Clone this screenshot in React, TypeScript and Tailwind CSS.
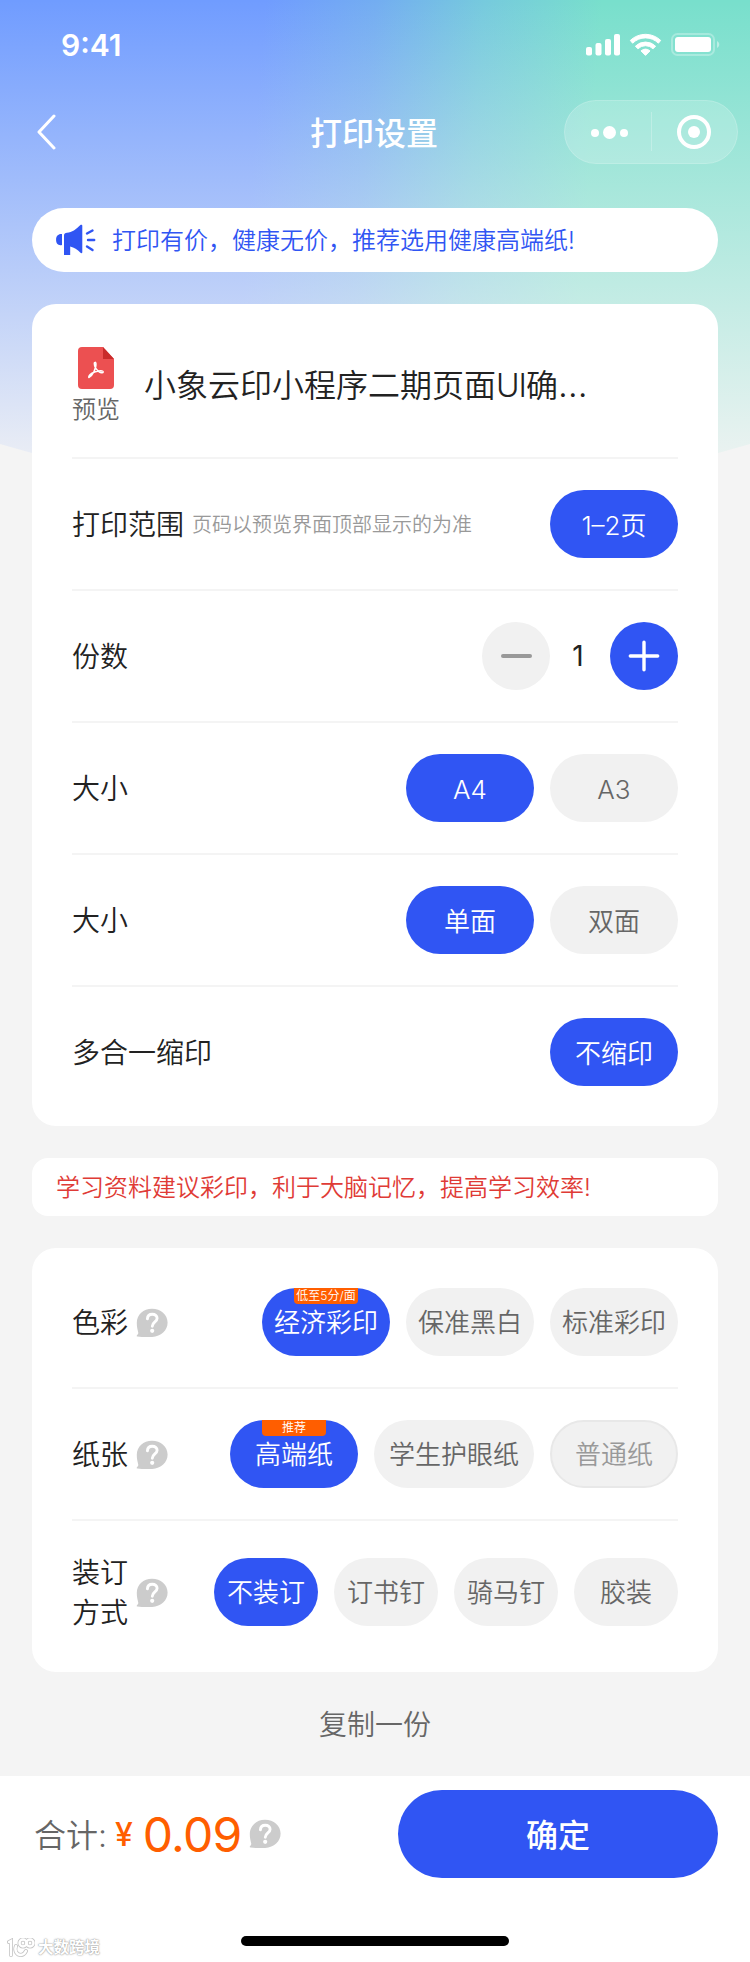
import { useState } from 'react';
import clsx from 'clsx';

interface Option {
  label: string;
  badge?: string;
  disabled?: boolean;
}

interface PillProps {
  option: Option;
  active: boolean;
  width?: string;
  onClick?: () => void;
}

function Pill({ option, active, width = 'w-32', onClick }: PillProps) {
  return (
    <button
      type="button"
      disabled={option.disabled}
      onClick={onClick}
      className={clsx(
        'relative flex h-[68px] items-center justify-center rounded-[34px] pt-0.5 text-[26px] whitespace-nowrap',
        width,
        active && 'bg-[#3055f3] text-white',
        !active && !option.disabled && 'bg-[#f1f1f1] text-[#666]',
        option.disabled && 'border-2 border-[#e8e8e8] bg-[#f1f1f1] text-[#999]'
      )}
    >
      {option.badge && (
        <span className="absolute top-0 left-1/2 flex h-4 w-16 -translate-x-1/2 items-center justify-center rounded-b bg-[#ff5e00] text-[12px] leading-none text-white">
          {option.badge}
        </span>
      )}
      {option.label}
    </button>
  );
}

interface PillGroupProps {
  options: Option[];
  width?: string;
  widths?: string[];
}

function PillGroup({ options, width, widths }: PillGroupProps) {
  const [selected, setSelected] = useState(0);

  return (
    <div className="flex gap-4">
      {options.map((option, i) => (
        <Pill
          key={option.label}
          option={option}
          active={i === selected}
          width={widths ? widths[i] : width}
          onClick={() => setSelected(i)}
        />
      ))}
    </div>
  );
}

function Row({ label, children, last }: { label: React.ReactNode; children: React.ReactNode; last?: boolean }) {
  return (
    <div
      className={clsx(
        'flex items-center justify-between',
        last ? 'h-[130px]' : 'h-[132px] border-b-2 border-[#f4f4f4]'
      )}
    >
      <div className="flex items-center gap-2 pt-0.5">{label}</div>
      {children}
    </div>
  );
}

function HelpIcon() {
  return (
    <svg width="32" height="30" viewBox="0 0 32 30" fill="none">
      <path
        d="M16 .8C24.8.8 31.6 6.800 31.600 14.600c0 8-6.600 14-15.400 14.300-5 .3-10.200.3-14.600-.3-1.100-.2-1.200-1-.4-1.700 1-.8 1.300-1.800.9-3C1.400 21.200.8 18.300.8 15 .8 6.800 7.400.8 16 .8Z"
        fill="#ccc"
      />
      <path d="M11.400 10.800c.2-3 2.200-4.600 4.900-4.600 2.800 0 4.800 1.600 4.800 4.100 0 3.700-4.800 3.500-4.800 8" stroke="#fff" strokeWidth="2.900" strokeLinecap="round" />
      <circle cx="16.200" cy="22.800" r="2.100" fill="#fff" />
    </svg>
  );
}

function HeaderBackground() {
  return (
    <svg className="absolute top-0 left-0" width="750" height="500" viewBox="0 0 750 500">
      <defs>
        <linearGradient id="hue" gradientUnits="userSpaceOnUse" x1="265" y1="0" x2="600" y2="25">
          <stop offset="0" stopColor="#709cff" />
          <stop offset="0.330" stopColor="#73adf1" />
          <stop offset="0.650" stopColor="#76cadd" />
          <stop offset="1" stopColor="#78dfcc" />
        </linearGradient>
        <linearGradient id="fade" x1="0" y1="0" x2="0" y2="1">
          <stop offset="0" stopColor="#f4f4f4" stopOpacity="0" />
          <stop offset="0.880" stopColor="#f4f4f4" stopOpacity="0.890" />
          <stop offset="1" stopColor="#f4f4f4" stopOpacity="1" />
        </linearGradient>
      </defs>
      <path d="M0 0H750V444Q560 500 375 500T0 444Z" fill="url(#hue)" />
      <path d="M0 0H750V500H0Z" fill="url(#fade)" />
    </svg>
  );
}

function StatusBar() {
  return (
    <div className="flex h-[90px] items-center justify-between pr-[29px] pl-[61px] text-white">
      <span className="font-['Inter'] text-[30px] font-semibold">9:41</span>
      <svg width="136" height="24" viewBox="0 0 136 24" fill="#fff">
        <rect x="1" y="14" width="6" height="8.500" rx="2" />
        <rect x="10.500" y="10" width="6" height="12.500" rx="2" />
        <rect x="20" y="6" width="6" height="16.500" rx="2" />
        <rect x="29" y="1" width="6" height="21.500" rx="2" />
        <path d="M45.300 7.400a22 22 0 0 1 30.400 0l-2.300 2.800a18.300 18.300 0 0 0-25.800 0Z" stroke="#fff" strokeWidth="1" strokeLinejoin="round" />
        <path d="M50.400 13.200a14.300 14.300 0 0 1 20.200 0l-2.500 2.600a10.800 10.800 0 0 0-15.200 0Z" stroke="#fff" strokeWidth="1" strokeLinejoin="round" />
        <path d="M60.500 22.400 56 17.900q4.500-3.600 9 0Z" stroke="#fff" strokeWidth="1" strokeLinejoin="round" />
        <rect x="87" y="1" width="42" height="21" rx="5.500" fill="none" stroke="#fff" strokeOpacity="0.300" strokeWidth="2" />
        <rect x="90" y="4" width="36" height="15" rx="3" />
        <path d="M132 8c3 1.500 3 5.500 0 7Z" fillOpacity="0.450" />
      </svg>
    </div>
  );
}

function NavBar() {
  return (
    <div className="flex h-[84px] items-center justify-between pr-3 pl-9 text-white">
      <div className="w-[174px]">
        <svg width="22" height="36" viewBox="0 0 22 36" fill="none">
          <path d="M18 2 3 18l15 16" stroke="#fff" strokeWidth="3" strokeLinecap="round" strokeLinejoin="round" />
        </svg>
      </div>
      <h1 className="mr-[26px] pt-[3px] text-[32px] font-medium">打印设置</h1>
      <svg width="174" height="64" viewBox="0 0 174 64" fill="#fff">
        <rect x="0.500" y="0.500" width="173" height="63" rx="31.500" fillOpacity="0.180" stroke="#fff" strokeOpacity="0.250" />
        <circle cx="31" cy="33" r="4" />
        <circle cx="45.500" cy="32.500" r="6.500" />
        <circle cx="60" cy="33" r="4" />
        <rect x="87" y="12" width="1" height="39" fillOpacity="0.250" />
        <circle cx="130" cy="32" r="15" fill="none" stroke="#fff" strokeWidth="4" />
        <circle cx="130" cy="32" r="6" />
      </svg>
    </div>
  );
}

function Notice() {
  return (
    <div className="mt-[34px] flex h-16 items-center rounded-[32px] bg-white pl-6 text-2xl text-[#3055f3]">
      <svg className="mr-4" width="40" height="32" viewBox="0 0 40 32" fill="#3055f3">
        <path d="M6 10v11C2 22-.1 19.200.1 15.500.1 11.800 2.500 9.500 6 10Z" />
        <path d="M8 11.500c0-1.800 1.200-2.800 3-2.800 5 0 9-3.200 13.400-7.600.6-.6 1.900-.5 1.900.6v26.500c0 1.100-1 1.300-1.800.6-3.200-3-6.300-5.300-10.300-6.200V31H8Z" />
        <path d="m31 9.500 5.500-3M32 16h6.200M31 22.500l5.500 3.500" stroke="#3055f3" strokeWidth="2.400" strokeLinecap="round" />
      </svg>
      <span className="pt-0.5">打印有价，健康无价，推荐选用健康高端纸!</span>
    </div>
  );
}

function PdfIcon() {
  return (
    <svg width="36" height="42" viewBox="0 0 36 42">
      <path d="M4 0h21l11 12v26a4 4 0 0 1-4 4H4a4 4 0 0 1-4-4V4a4 4 0 0 1 4-4Z" fill="#ec5051" />
      <path d="M25 0l11 12H25Z" fill="#c92b2b" />
      <path
        d="M10.800 30.500c2-1.100 3.900-3.100 5-5.500 1.500-3 2.400-6.200 2.100-8.600-.2-1.500-1.700-1.300-1.600.2.100 3.100 2.200 6.300 4.900 8.200 1.500 1 3.700 1.400 4 .2.200-1-1.900-1.400-4.200-1.100-2.500.3-5.100 1.200-7 2.300-1.700 1.100-3.400 2.800-3.200 4.300Z"
        fill="none"
        stroke="#fff"
        strokeWidth="1.500"
        strokeLinejoin="round"
      />
    </svg>
  );
}

function Stepper() {
  const [count, setCount] = useState(1);

  return (
    <div className="flex items-center">
      <button
        type="button"
        onClick={() => setCount(Math.max(1, count - 1))}
        className="flex size-[68px] items-center justify-center rounded-full bg-[#f1f1f1]"
      >
        <span className="h-1 w-[31px] rounded-full bg-[#999]" />
      </button>
      <span className="w-[60px] pr-1 text-center text-[28px] font-normal text-[#222]">{count}</span>
      <button
        type="button"
        onClick={() => setCount(count + 1)}
        className="flex size-[68px] items-center justify-center rounded-full bg-[#3055f3]"
      >
        <svg width="32" height="32" viewBox="0 0 32 32">
          <path d="M16 2.300v27.400M2.300 16h27.400" stroke="#fff" strokeWidth="3.400" strokeLinecap="round" />
        </svg>
      </button>
    </div>
  );
}

function Watermark() {
  return (
    <div className="absolute bottom-1 left-[7px] flex items-center gap-[3px] text-white">
      <svg width="28" height="20" viewBox="0 0 28 20" fill="none" strokeLinecap="round">
        <g stroke="#c4c4c4" strokeWidth="4">
          <path d="M2 4l2-1v14M9 8c-2 5 1 9 5 9 3 0 4-2 5-4" />
          <circle cx="16" cy="5" r="3.500" />
          <circle cx="23" cy="5" r="3.500" />
        </g>
        <g stroke="#fff" strokeWidth="2.400">
          <path d="M2 4l2-1v14M9 8c-2 5 1 9 5 9 3 0 4-2 5-4" />
          <circle cx="16" cy="5" r="3.500" />
          <circle cx="23" cy="5" r="3.500" />
        </g>
      </svg>
      <span className="text-[15.500px] leading-5 font-bold [text-shadow:0_0_2px_#999,0_0_1px_#999]">大数跨境</span>
    </div>
  );
}

export default function App() {
  return (
    <div className="relative flex h-[1962px] w-[750px] flex-col overflow-hidden bg-[#f4f4f4] font-['Inter','Noto_Sans_CJK_SC',sans-serif] font-[350]">
      <HeaderBackground />

      <header className="relative">
        <StatusBar />
        <NavBar />
      </header>

      <main className="relative flex flex-1 flex-col px-8">
        <Notice />

        <section className="mt-8 h-[822px] rounded-3xl bg-white px-10 text-[28px] text-[#222]">
          <div className="flex h-[155px] items-center border-b-2 border-[#f4f4f4] pt-3">
            <div className="flex w-12 flex-col items-center text-2xl leading-8 text-[#666]">
              <PdfIcon />
              <span className="mt-[5px]">预览</span>
            </div>
            <h2 className="-mt-0.5 ml-6 text-[32px]">
              小象云印小程序二期页面<span className="tracking-[-1px]">UI</span>确
              <span className="text-[35px] leading-none">…</span>
            </h2>
          </div>
          <Row
            label={
              <>
                打印范围
                <span className="text-xl text-[#999]">页码以预览界面顶部显示的为准</span>
              </>
            }
          >
            <PillGroup options={[{ label: '1–2页' }]} />
          </Row>
          <Row label="份数">
            <Stepper />
          </Row>
          <Row label="大小">
            <PillGroup options={[{ label: 'A4' }, { label: 'A3' }]} />
          </Row>
          <Row label="大小">
            <PillGroup options={[{ label: '单面' }, { label: '双面' }]} />
          </Row>
          <Row label="多合一缩印" last>
            <PillGroup options={[{ label: '不缩印' }]} />
          </Row>
        </section>

        <p className="mt-8 flex h-[58px] items-center rounded-2xl bg-white pt-0.5 pl-6 text-2xl text-[#df3b36]">
          学习资料建议彩印，利于大脑记忆，提高学习效率!
        </p>

        <section className="mt-8 h-[424px] rounded-3xl bg-white px-10 pt-[9px] text-[28px] leading-10 text-[#222]">
          <Row
            label={
              <>
                色彩
                <HelpIcon />
              </>
            }
          >
            <PillGroup
              options={[{ label: '经济彩印', badge: '低至5分/面' }, { label: '保准黑白' }, { label: '标准彩印' }]}
            />
          </Row>
          <Row
            label={
              <>
                纸张
                <HelpIcon />
              </>
            }
          >
            <PillGroup
              options={[
                { label: '高端纸', badge: '推荐' },
                { label: '学生护眼纸' },
                { label: '普通纸', disabled: true },
              ]}
              widths={['w-32', 'w-40', 'w-32']}
            />
          </Row>
          <div className="flex h-[142px] items-center justify-between">
            <div className="flex items-center gap-2 pt-0.5">
              <span className="w-14">装订方式</span>
              <HelpIcon />
            </div>
            <PillGroup
              options={[{ label: '不装订' }, { label: '订书钉' }, { label: '骑马钉' }, { label: '胶装' }]}
              width="w-[104px]"
            />
          </div>
        </section>

        <button type="button" className="flex-1 pt-0.5 text-[28px] text-[#666]">
          复制一份
        </button>
      </main>

      <footer className="relative h-[186px] bg-white">
        <div className="flex items-center justify-between pt-3.5 pr-8 pl-[34px]">
          <div className="flex items-center">
            <span className="pt-[3px] text-[32px] text-[#666]">合计:</span>
            <span className="ml-2 pt-0.5 text-[32px] font-[450] text-[#ff5e00]">¥</span>
            <span className="ml-2.5 pt-0.5 text-5xl font-normal tracking-[-0.8px] text-[#ff5e00]">0.09</span>
            <span className="ml-2">
              <HelpIcon />
            </span>
          </div>
          <button type="button" className="h-[88px] w-80 rounded-[44px] bg-[#3055f3] pt-[3px] text-[32px] font-medium text-white">
            确定
          </button>
        </div>
        <div className="mx-auto mt-[58px] h-2.5 w-[268px] rounded-full bg-black" />
        <Watermark />
      </footer>
    </div>
  );
}
